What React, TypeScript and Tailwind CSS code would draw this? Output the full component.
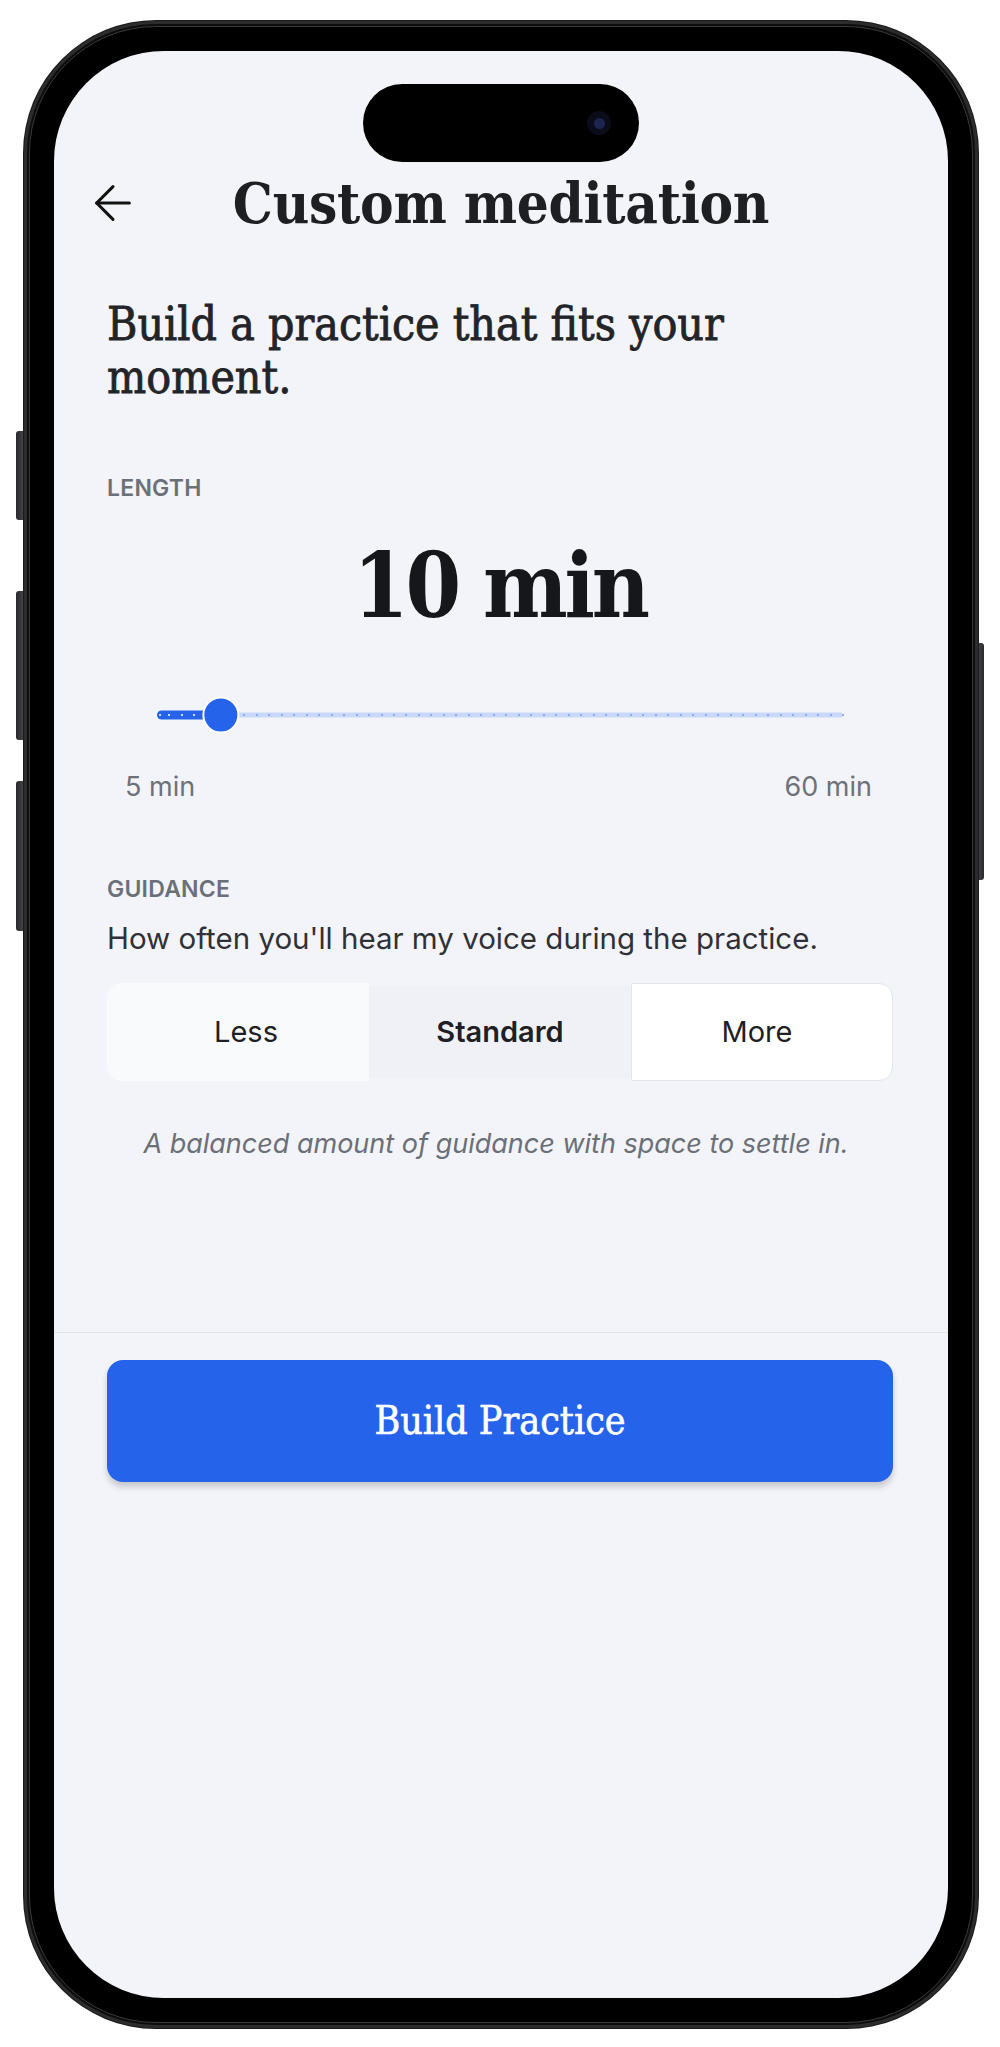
import { ArrowLeft } from 'lucide-react'

const MIN = 5
const MAX = 60

const serif = "font-['DejaVu_Serif_Condensed','DejaVu_Serif',serif] [font-stretch:condensed]"
const sans = "font-['Inter','Noto_Sans',sans-serif]"

function LengthSlider({ value }: { value: number }) {
  const pct = ((value - MIN) / (MAX - MIN)) * 100
  const ticks = Array.from({ length: MAX - MIN + 1 }, (_, i) => i)

  return (
    <div className="relative mx-[50px] h-[40px]">
      <div className="absolute left-0 right-0 top-1/2 h-[5px] -translate-y-1/2 rounded-full bg-[#c9d8f8]" />
      <div
        className="absolute left-0 top-1/2 h-[9px] -translate-y-1/2 rounded-full bg-[#2563eb]"
        style={{ width: `${pct}%` }}
      />
      {ticks.map(i => {
        const active = i + MIN < value
        return (
          <span
            key={i}
            className={
              active
                ? 'absolute top-1/2 h-[2px] w-[2px] -translate-x-1/2 -translate-y-1/2 rounded-full bg-white'
                : 'absolute top-1/2 h-[2px] w-[2px] -translate-x-1/2 -translate-y-1/2 rounded-full bg-[#7b9ded]'
            }
            style={{ left: `${(i / (MAX - MIN)) * 100 + (i === 0 ? 0.5 : 0)}%` }}
          />
        )
      })}
      <div
        className="absolute top-1/2 h-[37px] w-[37px] -translate-x-[45%] -translate-y-1/2 rounded-full border-2 border-white bg-[#2563eb]"
        style={{ left: `${pct}%` }}
      />
    </div>
  )
}

function Screen() {
  return (
    <div className="relative flex h-full flex-col overflow-hidden rounded-[110px] bg-[#f3f4fa] pt-[120px]">
      {/* dynamic island */}
      <div className="absolute left-1/2 top-[33px] h-[78px] w-[276px] -translate-x-1/2 rounded-full bg-black">
        <div className="absolute right-[28px] top-1/2 flex h-[24px] w-[24px] -translate-y-1/2 items-center justify-center rounded-full bg-[#0a0c1a]">
          <div className="h-[11px] w-[11px] rounded-full bg-[#1d2450]" />
        </div>
      </div>

      {/* header */}
      <div className="grid h-[64px] grid-cols-[1fr_auto_1fr] items-center px-[31px]">
        <ArrowLeft size={56} strokeWidth={1.3} className="text-[#111]" />
        <h1 className={`${serif} text-[56px] leading-[64px] font-bold tracking-[-0.005em] text-[#1e1f22]`}>
          Custom meditation
        </h1>
        <div />
      </div>

      <div className={`flex flex-col pl-[53px] pr-[55px] ${sans}`}>
        <p
          className={`${serif} mt-[63px] max-w-[700px] text-[46px] leading-[53px] text-[#232428] [-webkit-text-stroke:0.8px_#232428]`}
        >
          Build a practice that fits your moment.
        </p>

        <p className="mt-[70px] text-[23px] leading-[28px] font-semibold tracking-[0.01em] text-[#6b7078]">LENGTH</p>
        <p className={`${serif} mt-[34px] text-center text-[89px] leading-[100px] font-bold tracking-[-0.035em] text-[#16171a]`}>
          10 min
        </p>

        <div className="mt-[59px]">
          <LengthSlider value={10} />
        </div>

        <div className="mt-[34px] flex justify-between pl-[18px] pr-[21px] text-[27px] leading-[36px] text-[#6e7178]">
          <span>5 min</span>
          <span>60 min</span>
        </div>

        <p className="mt-[70px] text-[23px] leading-[28px] font-semibold tracking-[0.01em] text-[#6b7078]">GUIDANCE</p>
        <p className="mt-[17px] text-[29.5px] leading-[36px] text-[#2f3136]">
          How often you'll hear my voice during the practice.
        </p>

        <div className="mt-[27px] grid h-[98px] grid-cols-3 text-[29px] text-[#1f2023]">
          <div className="flex items-center justify-center rounded-l-[14px] bg-[#f9fafc] pl-[16px]">Less</div>
          <div className="my-[3px] flex items-center justify-center bg-[#eff1f6] font-semibold">Standard</div>
          <div className="flex items-center justify-center rounded-r-[14px] border border-[#e3e5ea] bg-white pr-[10px]">
            More
          </div>
        </div>

        <p className="mt-[45px] pr-[8px] text-center text-[27px] leading-[36px] italic text-[#6b6f76]">
          A balanced amount of guidance with space to settle in.
        </p>
      </div>

      {/* footer */}
      <div className="mt-[170px] border-t border-[#e2e4ea] pl-[53px] pr-[55px] pt-[27px]">
        <button
          className={`${serif} flex h-[122px] w-full items-center justify-center rounded-[16px] bg-[#2563eb] text-[39px] text-white shadow-[0_5px_6px_rgba(0,0,0,0.18)] [-webkit-text-stroke:0.6px_#ffffff]`}
        >
          Build Practice
        </button>
      </div>
    </div>
  )
}

export default function App() {
  return (
    <div className="h-[2047px] w-[1000px] bg-white pl-[24px] pt-[21px]">
      <div className="relative h-[2007px] w-[954px]">
        {/* side buttons */}
        <div className="absolute left-[-8px] top-[410px] h-[89px] w-[9px] rounded-l-[3px] bg-gradient-to-r from-[#2a2a2c] to-[#4a4a4c]" />
        <div className="absolute left-[-8px] top-[570px] h-[149px] w-[9px] rounded-l-[3px] bg-gradient-to-r from-[#2a2a2c] to-[#4a4a4c]" />
        <div className="absolute left-[-8px] top-[760px] h-[150px] w-[9px] rounded-l-[3px] bg-gradient-to-r from-[#2a2a2c] to-[#4a4a4c]" />
        <div className="absolute right-[-6px] top-[622px] h-[237px] w-[7px] rounded-r-[3px] bg-gradient-to-l from-[#2a2a2c] to-[#4a4a4c]" />

        <div className="relative h-full rounded-[132px] bg-[#2c2c2e] p-[3px] shadow-[0_0_0_1px_#1a1a1a]">
          <div className="h-full rounded-[129px] bg-[#0d0d0d] p-[2px]">
            <div className="h-full rounded-[127px] border border-[#3a3a3a] bg-black p-[24px]">
              <Screen />
            </div>
          </div>
        </div>
      </div>
    </div>
  )
}
